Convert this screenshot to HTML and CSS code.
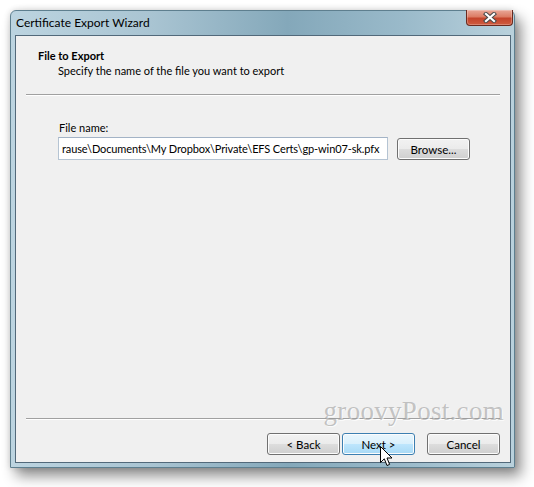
FILE: index.html
```html
<!DOCTYPE html>
<html>
<head>
<meta charset="utf-8">
<link rel="stylesheet" href="styles.css">
</head>
<body>
<div class="window">
  <div class="titlebar">
    <span class="title">Certificate Export Wizard</span>
    <div class="close">
      <svg width="14" height="11" viewBox="0 0 14 11">
        <path d="M3 2 L11 9 M11 2 L3 9" stroke="#4a4a4a" stroke-width="4.2" stroke-linecap="square"/>
        <path d="M3 2 L11 9 M11 2 L3 9" stroke="#ffffff" stroke-width="2.2" stroke-linecap="square"/>
      </svg>
    </div>
  </div>
  <div class="client">
    <div class="header">
      <div class="h-title">File to Export</div>
      <div class="h-sub">Specify the name of the file you want to export</div>
    </div>
    <div class="sep"></div>
    <div class="body">
      <div class="label">File name:</div>
      <div class="field-row">
        <div class="input"><span class="input-text">rause\Documents\My Dropbox\Private\EFS Certs\gp-win07-sk.pfx</span></div>
        <div class="btn browse">Browse...</div>
      </div>
    </div>
    <div class="sep"></div>
    <div class="footer">
      <div class="btn">&lt; Back</div>
      <div class="btn hover">Next &gt;</div>
      <div class="btn cancel">Cancel</div>
    </div>
    <div class="watermark">groovyPost.com</div>
  </div>
</div>
<svg class="cursor" width="14" height="22" viewBox="0 0 14 22">
  <path d="M0.5 0.5 L0.5 16.5 L4.3 12.8 L7 19.5 L9.6 18.4 L7 12 L12 12 Z" fill="#ffffff" stroke="#000000" stroke-width="1" stroke-linejoin="miter"/>
</svg>
</body>
</html>
```

FILE: styles.css
```css
html, body {
  margin: 0;
  padding: 0;
  background: #ffffff;
}
body {
  width: 534px;
  height: 487px;
  overflow: hidden;
  position: relative;
  font-family: "Lato", "Open Sans", sans-serif;
  font-size: 11px;
  color: #000;
}
.window {
  box-sizing: border-box;
  width: 505px;
  height: 458px;
  margin: 10px 0 0 10px;
  padding: 0 3px 4px 4px;
  display: flex;
  flex-direction: column;
  border: 1px solid #5e7f8f;
  border-radius: 6px 6px 0 0;
  background: linear-gradient(to right, #bcd4e0 0%, #a9c4d2 28%, #84a8ba 55%, #9abaca 78%, #b9d1dc 100%);
  box-shadow: 6px 8px 14px rgba(0,0,0,0.45), 0 0 6px rgba(0,0,0,0.15);
}
.titlebar {
  height: 24px;
  display: flex;
  align-items: flex-start;
}
.title {
  padding-left: 1px;
  line-height: 24px;
  font-size: 12px;
  color: #000;
}
.close {
  margin-left: auto;
  margin-right: -2px;
  margin-top: -1px;
  box-sizing: border-box;
  width: 47px;
  height: 16px;
  border: 1px solid #6b2a1e;
  border-top: none;
  border-radius: 0 0 4px 4px;
  background: linear-gradient(to bottom, #e9a898 0%, #dc7c64 45%, #c4442b 55%, #cf5c40 100%);
  display: flex;
  align-items: center;
  justify-content: center;
  box-shadow: inset 0 0 0 1px rgba(255,255,255,0.25);
}
.client {
  flex: 1;
  position: relative;
  display: flex;
  flex-direction: column;
  background: #f0f0f0;
  border: 1px solid #52697a;
}
.header {
  height: 58px;
  box-sizing: border-box;
  padding: 12px 0 0 22px;
}
.h-title {
  font-weight: bold;
  line-height: 15px;
}
.h-sub {
  padding-left: 20px;
  line-height: 15px;
}
.sep {
  margin: 0 10px;
  border-top: 1px solid #a0a0a0;
  border-bottom: 1px solid #ffffff;
}
.body {
  flex: 1;
  padding: 24px 0 0 42px;
}
.label {
  line-height: 15px;
  padding-left: 1px;
}
.field-row {
  display: flex;
  align-items: flex-start;
  margin-top: 2px;
  gap: 9px;
}
.input {
  box-sizing: border-box;
  width: 330px;
  height: 23px;
  background: #fff;
  border: 1px solid #b5c4d3;
  border-top-color: #a3b3c6;
  display: flex;
  align-items: center;
  overflow: hidden;
  padding-left: 3px;
}
.input-text {
  white-space: nowrap;
  letter-spacing: -0.12px;
}
.btn {
  box-sizing: border-box;
  width: 73px;
  height: 22px;
  border: 1px solid #707070;
  border-radius: 3px;
  background: linear-gradient(to bottom, #f2f2f2 0%, #ebebeb 50%, #dddddd 50%, #cfcfcf 100%);
  box-shadow: inset 0 0 0 1px #fcfcfc;
  display: flex;
  align-items: center;
  justify-content: center;
  font-size: 11.5px;
}
.browse {
  margin-top: 1px;
}
.footer {
  height: 42px;
  display: flex;
  justify-content: flex-end;
  align-items: flex-start;
  padding: 13px 10px 0 0;
  box-sizing: border-box;
}
.footer .btn + .btn {
  margin-left: 2px;
}
.footer .cancel {
  margin-left: 12px !important;
}
.btn.hover {
  border-color: #3c7fb1;
  background: linear-gradient(to bottom, #eaf6fd 0%, #d9f0fc 50%, #bee6fd 50%, #a7d9f5 100%);
}
.watermark {
  position: absolute;
  right: 6px;
  bottom: 35px;
  font-family: "Liberation Serif", "DejaVu Serif", serif;
  font-size: 27px;
  letter-spacing: 0.3px;
  color: rgba(150,150,150,0.55);
  text-shadow: 1px 1px 0 rgba(255,255,255,0.7);
}
.cursor {
  position: absolute;
  left: 380px;
  top: 446px;
}
```
